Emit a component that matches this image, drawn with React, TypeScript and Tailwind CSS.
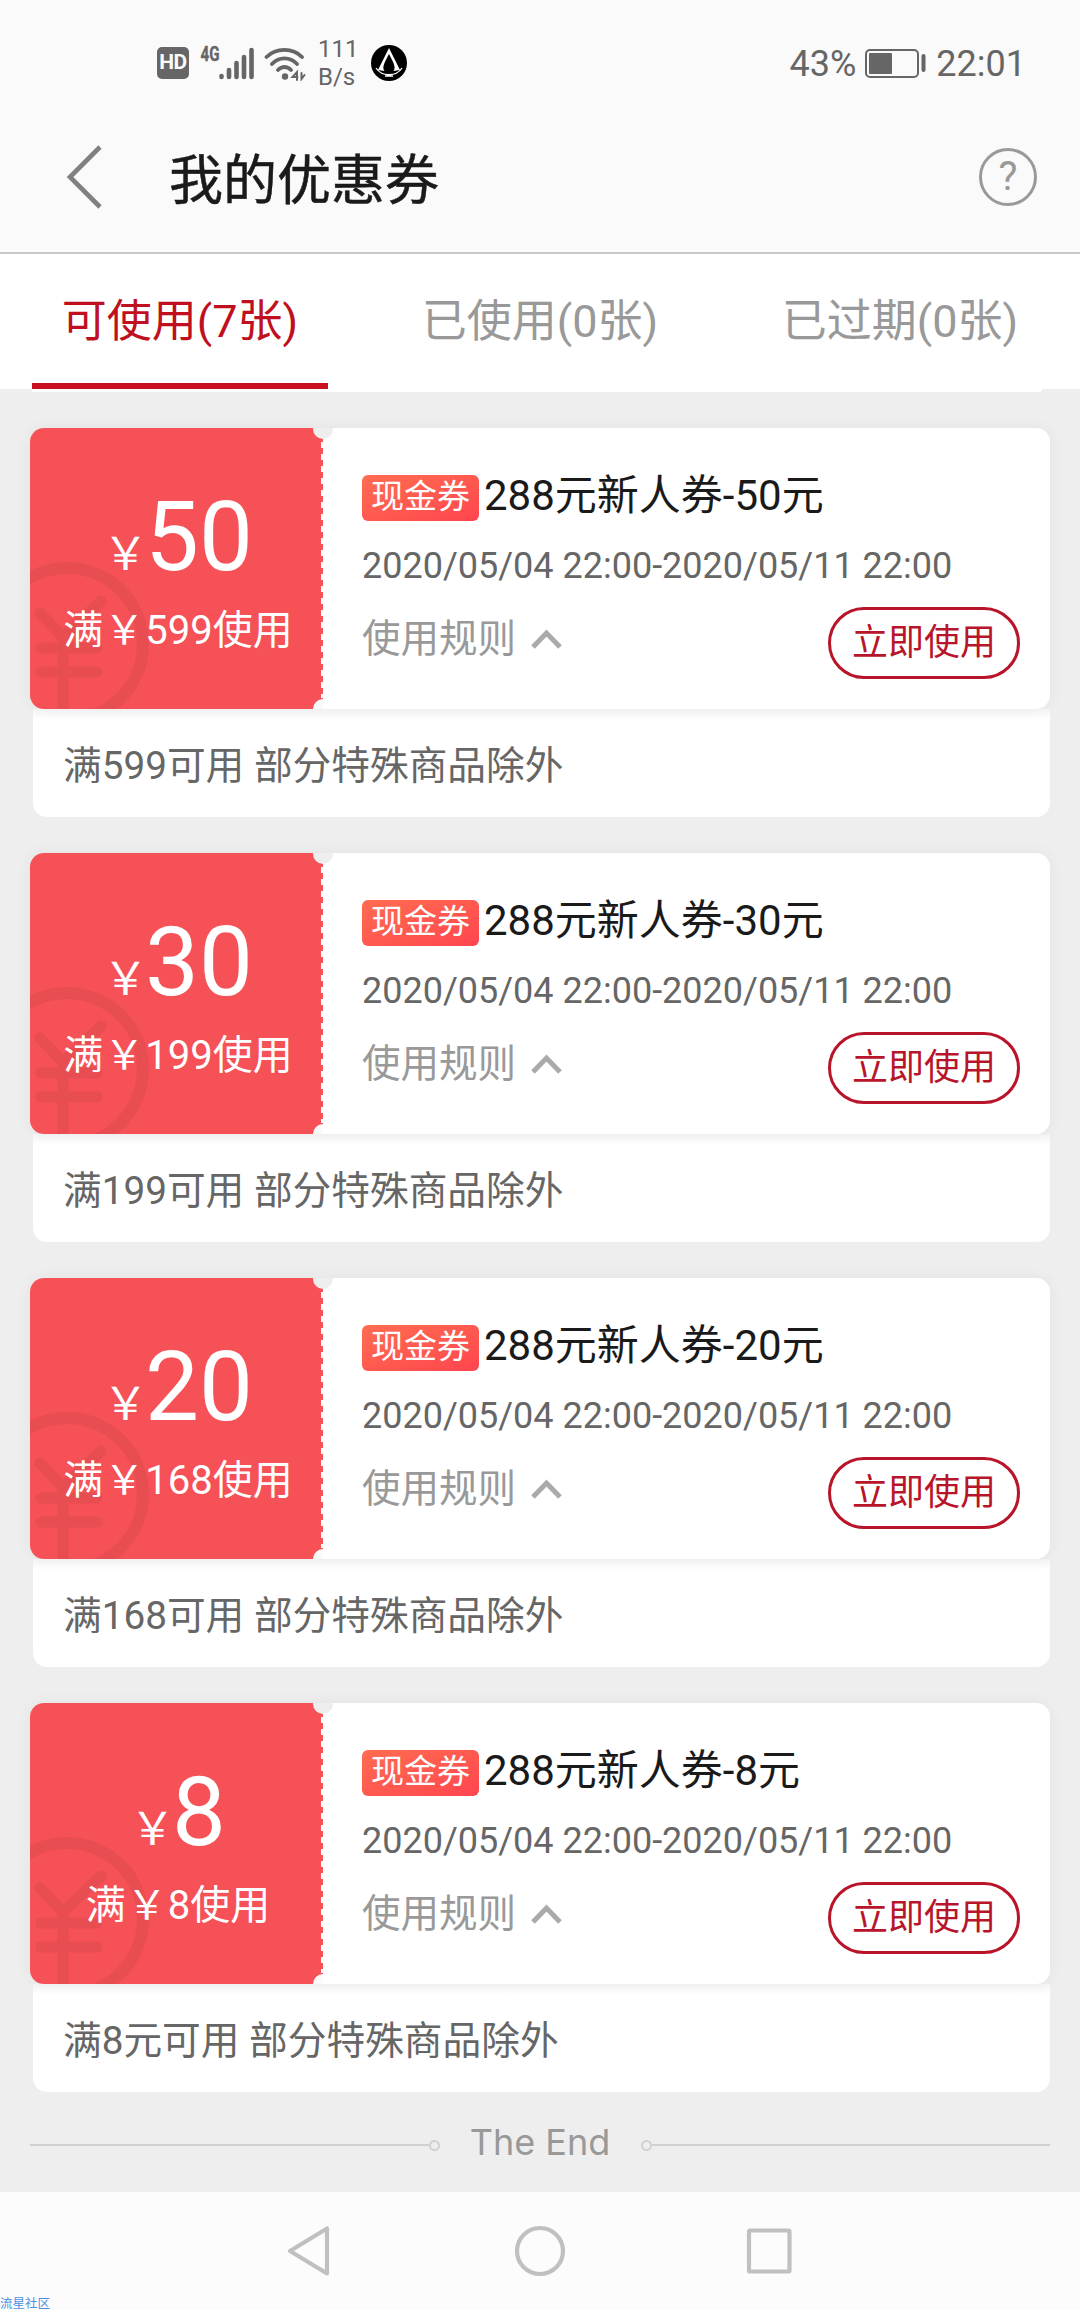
const coupons = [
  { amount: '50', limit: '599使用', title: '288元新人券-50元', rule: '满599可用 部分特殊商品除外' },
  { amount: '30', limit: '199使用', title: '288元新人券-30元', rule: '满199可用 部分特殊商品除外' },
  { amount: '20', limit: '168使用', title: '288元新人券-20元', rule: '满168可用 部分特殊商品除外' },
  { amount: '8', limit: '8使用', title: '288元新人券-8元', rule: '满8元可用 部分特殊商品除外' },
];

const tabs = ['可使用(7张)', '已使用(0张)', '已过期(0张)'];

function StatusBar() {
  return (
    <div className="flex h-[112px] items-center justify-between pt-[13px] pr-[54px] pl-[157px] text-[#666]">
      <div className="flex items-center">
        <div className="flex h-[32px] w-[32px] items-center justify-center rounded-[5px] bg-[#666] font-[Roboto] text-[21px] font-bold tracking-[-0.5px] text-[#fafafa]">
          HD
        </div>
        <svg className="ml-[8px]" width="59" height="40" viewBox="0 0 59 40" fill="none" stroke="#666" strokeLinecap="round">
          <text x="3.500" y="18" fill="#666" stroke="#666" strokeWidth="0.400" fontFamily="Roboto" fontSize="21" fontWeight="700" textLength="19" lengthAdjust="spacingAndGlyphs">
            4G
          </text>
          <path d="M24.500 33v1M32 27v7M39.500 20v14M47 14v20M54.500 7v27" strokeWidth="4.600" />
        </svg>
        <svg className="ml-[8px]" width="42" height="36" viewBox="0 0 42 36" fill="none" stroke="#666" strokeWidth="3.800" strokeLinecap="round">
          <path d="M2.500 12C12 2.500 29 2.500 38 12M8 19C15 11.500 26 11.500 33 19M14 25C18 21 23 21 27 25" />
          <circle cx="21" cy="31.500" r="3.200" fill="#666" stroke="none" />
          <path d="M33 35v-8l-4.500 5h5M37.500 28v6l3-4" strokeWidth="2" />
        </svg>
        <div className="ml-[12px] w-[44px] font-[Roboto] text-[24px] leading-[28px]">
          111
          <br />
          B/s
        </div>
        <svg className="ml-[9px]" width="36" height="36" viewBox="0 0 36 36">
          <circle cx="18" cy="18" r="18" fill="#000" />
          <path d="M18 3L7 25L13.500 26C10.500 22 14 17 18 9C22 17 25.500 22 22.500 26L29 25Z" fill="#fff" />
          <path d="M5 23C11 32 25 32 31 23M14 31h8" fill="none" stroke="#fff" strokeWidth="1.300" />
        </svg>
      </div>
      <div className="flex items-center pt-[2px] font-[Roboto] text-[36px] leading-[40px]">
        <span>43%</span>
        <svg className="mr-[10px] ml-[9px]" width="61" height="30" viewBox="0 0 61 30" fill="none">
          <rect x="1" y="1" width="52" height="27" rx="4" stroke="#666" strokeWidth="2" />
          <rect x="4" y="4" width="23" height="21" rx="1" fill="#666" />
          <rect x="56.500" y="5" width="4" height="18" rx="2" fill="#666" />
        </svg>
        <span>22:01</span>
      </div>
    </div>
  );
}

function Header() {
  return (
    <div className="flex h-[142px] items-center justify-between border-b-2 border-[#c8c8c8] pr-[43px] pl-[66px]">
      <div className="flex items-center">
        <svg className="-mt-[11px]" width="38" height="66" viewBox="0 0 38 66" fill="none" stroke="#808080" strokeWidth="4.600">
          <path d="M34 3L4 33L34 63" />
        </svg>
        <h1 className="-mt-px ml-[65px] text-[54px] leading-[70px] text-[#1a1a1a] [-webkit-text-stroke:0.5px_#1a1a1a]">我的优惠券</h1>
      </div>
      <div className="-mt-[10px] flex h-[58px] w-[58px] items-center justify-center rounded-full border-[3px] border-[#999] font-[Roboto] text-[40px] leading-none text-[#999]">
        ?
      </div>
    </div>
  );
}

function Tabs() {
  return (
    <div className="h-[138px] bg-[#eee]">
      <div className="flex h-[135px] bg-white">
        {tabs.map((tab, i) => (
          <div key={tab} className="flex flex-1 justify-center">
            <div
              className={
                i === 0
                  ? 'h-[135px] w-[296px] border-b-[6px] border-[#c8101e] text-center text-[45px] leading-[136px] text-[#c01020]'
                  : 'h-[135px] text-center text-[45px] leading-[136px] text-[#999]'
              }
            >
              {tab}
            </div>
          </div>
        ))}
      </div>
      <div className="mr-[38px] ml-[32px] h-[3px] rounded-br-[3px] bg-white" />
    </div>
  );
}

function Coupon({ amount, limit, title, rule }: (typeof coupons)[number]) {
  return (
    <div className="h-[389px]">
      <div className="relative flex h-[281px] rounded-[14px] bg-white shadow-[0_0_16px_rgba(0,0,0,0.05)]">
        <div className="relative flex w-[293px] flex-col items-center overflow-hidden rounded-l-[14px] bg-[#f55157] text-white">
          <svg className="absolute top-0 left-0" width="293" height="281" viewBox="0 0 293 281" fill="none">
            <g stroke="#e84d52" strokeLinecap="round">
              <circle cx="37" cy="216" r="76" strokeWidth="12" />
              <path d="M10 185L33 209L71 173M11 220H67M11 244H67M33 209V290" strokeWidth="11" />
            </g>
            <path d="M292 14V270" stroke="#fff" strokeWidth="2" strokeDasharray="6 6" />
            <circle cx="293" cy="1" r="10" fill="#eee" />
            <circle cx="293" cy="281" r="10" fill="#fafafa" />
          </svg>
          <div className="relative mt-[53px] flex h-[112px] items-baseline leading-[112px]">
            <span className="-mr-[3px] ml-[3px] text-[45px]">￥</span>
            <span className="text-[96px]">{amount}</span>
          </div>
          <div className="relative mt-[10px] ml-[3px] text-[40px] leading-[56px]">
            满<span className="mr-[1px] ml-[1px]">￥</span>
            {limit}
          </div>
        </div>
        <div className="flex flex-1 flex-col pt-[38px] pr-[30px] pl-[39px]">
          <div className="flex h-[60px] items-center">
            <span className="mt-[4px] h-[46px] w-[117px] rounded-[6px] bg-gradient-to-br from-[#ff6c50] to-[#ff444f] text-center text-[33px] leading-[43px] text-white">
              现金券
            </span>
            <span className="ml-[5px] text-[42px] leading-[56px] text-[#1a1a1a]">{title}</span>
          </div>
          <div className="mt-[16px] h-[48px] text-[36px] leading-[48px] text-[#666]">2020/05/04 22:00-2020/05/11 22:00</div>
          <div className="mt-[17px] flex justify-between">
            <div className="flex h-[64px] items-center text-[38.500px] text-[#999]">
              使用规则
              <svg className="ml-[14px]" width="32" height="24" viewBox="0 0 32 24" fill="none" stroke="#aaa" strokeWidth="5">
                <path d="M3 20L16.500 6L30 20" />
              </svg>
            </div>
            <button className="h-[72px] w-[192px] rounded-full border-[3px] border-[#b8142a] text-[36px] leading-[67px] text-[#b8142a]">
              立即使用
            </button>
          </div>
        </div>
        <div className="absolute top-0 left-[293px] h-[11px] w-[10px] rounded-br-full bg-[#eee]" />
      </div>
      <div className="ml-[3px] h-[108px] rounded-b-[14px] bg-white bg-gradient-to-b from-[#f5f5f5] to-white to-10% pl-[30px] text-[38.700px] leading-[113px] text-[#666]">
        {rule}
      </div>
    </div>
  );
}

function TheEnd() {
  return (
    <div className="mt-[33px] flex h-[40px] items-center">
      <div className="h-[2px] flex-1 bg-[#d0d0d0]" />
      <div className="h-[11px] w-[11px] rounded-full border-2 border-[#d0d0d0]" />
      <div className="-mt-[7px] w-[201px] text-center font-[Inter] text-[36px] text-[#999]">The End</div>
      <div className="h-[11px] w-[11px] rounded-full border-2 border-[#d0d0d0]" />
      <div className="h-[2px] flex-1 bg-[#d0d0d0]" />
    </div>
  );
}

function NavBar() {
  return (
    <div className="relative flex h-[118px] items-center justify-center bg-[#fcfcfc]">
      <svg width="510" height="54" viewBox="0 0 510 54" fill="none" stroke="#c0c0c0" strokeWidth="4.200" strokeLinejoin="round">
        <path d="M42 4.500V49.500L5 27Z" />
        <circle cx="255" cy="27" r="23" />
        <rect x="464" y="6.500" width="40.500" height="41" rx="1" />
      </svg>
      <span className="absolute bottom-0 left-0 text-[12.500px] leading-[13px] text-[#4a90e2]">流星社区</span>
    </div>
  );
}

export default function App() {
  return (
    <div className="flex h-[2310px] w-[1080px] flex-col overflow-hidden bg-[#eee] font-[Roboto,'Noto_Sans_CJK_SC',sans-serif]">
      <div className="bg-[#fafafa]">
        <StatusBar />
        <Header />
      </div>
      <Tabs />
      <div className="flex flex-1 flex-col px-[30px] pt-[36px]">
        <div className="flex flex-col gap-[36px]">
          {coupons.map((c) => (
            <Coupon key={c.amount} {...c} />
          ))}
        </div>
        <TheEnd />
      </div>
      <NavBar />
    </div>
  );
}
